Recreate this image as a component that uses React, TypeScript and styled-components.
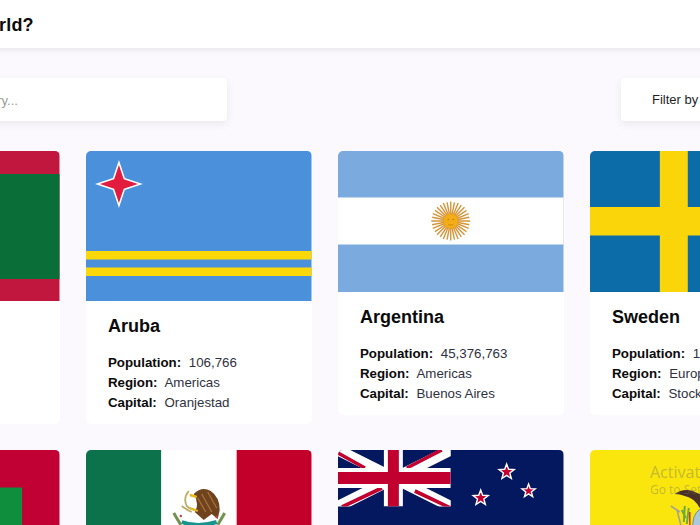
import React from "react";
import styled, { createGlobalStyle } from "styled-components";

const GlobalStyle = createGlobalStyle`
  html, body {
    margin: 0;
    padding: 0;
    height: 100%;
    overflow: hidden;
    background: #fbf9fd;
    font-family: "Liberation Sans", Arial, sans-serif;
  }
`;

const Viewport = styled.div`
  width: 700px;
  height: 525px;
  overflow: hidden;
  position: relative;
  background: #fbf9fd;
`;

const Page = styled.div`
  width: 1200px;
  margin-left: -166px;
`;

const Header = styled.header`
  height: 48px;
  background: #fff;
  box-shadow: 0 2px 6px rgba(0, 0, 0, 0.08);
  display: flex;
  align-items: center;
  padding: 2px 0 0 24px;
  box-sizing: border-box;
`;

const Title = styled.h1`
  margin: 0;
  font-size: 18px;
  font-weight: 700;
  letter-spacing: 0.2px;
  color: #0b0b0b;
  white-space: nowrap;
`;

const Toolbar = styled.div`
  display: flex;
  margin-top: 30px;
  height: 43px;
`;

const Search = styled.div`
  width: 393px;
  background: #fff;
  border-radius: 4px;
  box-shadow: 0 3px 8px rgba(0, 0, 0, 0.07);
  display: flex;
  align-items: center;
  padding: 2px 0 0 57px;
  box-sizing: border-box;
  font-size: 13px;
  color: #9a9a9a;
  white-space: nowrap;
`;

const Filter = styled.div`
  margin-left: 394px;
  width: 160px;
  background: #fff;
  border-radius: 4px;
  box-shadow: 0 3px 8px rgba(0, 0, 0, 0.07);
  display: flex;
  align-items: center;
  padding-left: 31px;
  box-sizing: border-box;
  font-size: 13px;
  color: #1f1f28;
  white-space: nowrap;
`;

const Grid = styled.div`
  display: grid;
  grid-template-columns: repeat(4, 225.5px);
  column-gap: 26.5px;
  row-gap: 26px;
  margin-top: 30px;
  align-items: start;
`;

const Card = styled.article`
  background: #fff;
  border-radius: 5px;
  overflow: hidden;
`;

const FlagBox = styled.svg.attrs({ preserveAspectRatio: "none" })`
  display: block;
  width: 100%;
`;

const Body = styled.div`
  padding: 14px 22px 11px;
`;

const Name = styled.h2`
  margin: 0 0 16px;
  font-size: 18px;
  line-height: 22px;
  font-weight: 700;
  color: #0b0b0b;
`;

const Stat = styled.div`
  font-size: 13.3px;
  line-height: 20px;
  color: #2f3140;
  white-space: nowrap;
`;

const StatLabel = styled.b`
  color: #0b0b0b;
  margin-right: 4px;
`;

const Watermark = styled.div`
  position: absolute;
  left: 650px;
  top: 463px;
  color: rgba(110, 110, 110, 0.4);
  font-family: "Open Sans", sans-serif;
  white-space: nowrap;
`;

const WatermarkTitle = styled.div`
  font-size: 16px;
  line-height: 19px;
`;

const WatermarkSub = styled.div`
  font-size: 12px;
  line-height: 16px;
`;

const Transnistria = () => (
  <FlagBox viewBox="0 0 226 150" height="150">
    <rect width="226" height="150" fill="#c1163d" />
    <rect y="23" width="226" height="105" fill="#0a6e38" />
  </FlagBox>
);

const Aruba = () => (
  <FlagBox viewBox="0 0 226 150" height="150">
    <rect width="226" height="150" fill="#4a90db" />
    <rect y="100" width="226" height="8.5" fill="#fdd809" />
    <rect y="116.5" width="226" height="8.5" fill="#fdd809" />
    <path d="M33 9 L39 27 L57 33 L39 39 L33 57 L27 39 L9 33 L27 27 Z" fill="#fff" />
    <path d="M33 14 L37.8 28.2 L52 33 L37.8 37.8 L33 52 L28.2 37.8 L14 33 L28.2 28.2 Z" fill="#e31b3f" />
  </FlagBox>
);

const sunRays = Array.from({ length: 32 }, (_, i) => (i * 360) / 32);

const Argentina = () => (
  <FlagBox viewBox="0 0 226 141" height="141">
    <rect width="226" height="141" fill="#7babde" />
    <rect y="46.5" width="226" height="47" fill="#fff" />
    {sunRays.map((a, i) => (
      <line
        key={a}
        x1="113"
        y1="70"
        x2="113"
        y2={i % 2 ? 51 : 50.5}
        stroke="#d6953a"
        strokeWidth="1.4"
        transform={`rotate(${a} 113 70)`}
      />
    ))}
    <circle cx="113" cy="70" r="7.5" fill="#f3ae17" stroke="#e09a1a" strokeWidth="0.6" />
    <circle cx="110.5" cy="68.5" r="0.8" fill="#b9791a" />
    <circle cx="115.5" cy="68.5" r="0.8" fill="#b9791a" />
    <path d="M110.5 73.5 Q113 75 115.5 73.5" stroke="#b9791a" strokeWidth="0.7" fill="none" />
  </FlagBox>
);

const Sweden = () => (
  <FlagBox viewBox="0 0 226 141" height="141">
    <rect width="226" height="141" fill="#0b6ca8" />
    <rect x="70" width="28" height="141" fill="#fad50a" />
    <rect y="56" width="226" height="28.5" fill="#fad50a" />
  </FlagBox>
);

const Maldives = () => (
  <FlagBox viewBox="0 0 226 150" height="150">
    <rect width="226" height="150" fill="#c10034" />
    <rect x="37.5" y="37.5" width="151" height="75" fill="#0f8f3e" />
  </FlagBox>
);

const Mexico = () => (
  <FlagBox viewBox="0 0 226 130" height="130">
    <rect width="75.5" height="130" fill="#0b724b" />
    <rect x="75.5" width="75.5" height="130" fill="#fff" />
    <rect x="151" width="75" height="130" fill="#c30029" />
    <path d="M108 44 Q116 36 125 41 Q134 47 134 60 L132 69 L126 64 L118 70 L109 62 Q114 54 108 44 Z" fill="#6f431d" />
    <path d="M116 44 L126 62 M122 42 L131 58 M112 48 L120 62" stroke="#a9713a" strokeWidth="1.3" />
    <path d="M103 41 Q97 48 101 56 Q105 60 110 60 M96 56 Q101 60 106 62" stroke="#b9ad6a" strokeWidth="1.8" fill="none" />
    <path d="M104 45 L111 47" stroke="#e8b81c" strokeWidth="2.4" />
    <path d="M104 58 L112 61" stroke="#e8b81c" strokeWidth="2" />
    <path d="M88 63 L92 70 M91 68 L95 75" stroke="#72934f" strokeWidth="3" fill="none" />
    <path d="M139 63 L135 70 M136 68 L132 75" stroke="#72934f" strokeWidth="3" fill="none" />
    <path d="M96 72 Q112 78 131 72" stroke="#19938e" strokeWidth="4" fill="none" />
    <circle cx="95" cy="66" r="1.2" fill="#c6394a" />
    <circle cx="131" cy="67" r="1.2" fill="#c6394a" />
  </FlagBox>
);

const nzStars = [
  [169, 22, 8],
  [143, 48, 8],
  [191, 41, 7],
];

const starPoints = (cx: number, cy: number, r: number) =>
  Array.from({ length: 10 }, (_, i) => {
    const rad = i % 2 ? r * 0.42 : r;
    const a = (i * Math.PI) / 5 - Math.PI / 2;
    return `${cx + rad * Math.cos(a)},${cy + rad * Math.sin(a)}`;
  }).join(" ");

const NewZealand = () => (
  <FlagBox viewBox="0 0 226 113" height="113">
    <rect width="226" height="113" fill="#03185f" />
    <svg width="113" height="56.5" viewBox="0 0 113 56.5">
      <path d="M0 0 L113 56.5 M113 0 L0 56.5" stroke="#fff" strokeWidth="11" />
      <path d="M0 3 L27 18 M69 18 L104 0 M4 57 L44 38 M77 41 L113 58" stroke="#c2002f" strokeWidth="3.6" />
      <rect x="46" width="19" height="56.5" fill="#fff" />
      <rect y="18" width="113" height="20" fill="#fff" />
      <rect x="50" width="11" height="56.5" fill="#c2002f" />
      <rect y="22" width="113" height="12" fill="#c2002f" />
    </svg>
    {nzStars.map(([cx, cy, r]) => (
      <polygon key={cx} points={starPoints(cx, cy, r)} fill="#c2002f" stroke="#fff" strokeWidth="1.4" />
    ))}
  </FlagBox>
);

const Ecuador = () => (
  <FlagBox viewBox="0 0 226 150" height="150">
    <rect width="226" height="150" fill="#fae60c" />
    <path d="M85 44 Q93 38 103 41 L112 45 L116 56 L112 62 Q106 48 95 46 Q90 44 85 44 Z" fill="#4a3128" />
    <path d="M87 59 L91 75 M81 56 L90 62" stroke="#a9a196" strokeWidth="1.6" />
    <path d="M95 56 L94 72 M99 58 L97 74 M92 60 L96 68" stroke="#6fa83f" strokeWidth="2" />
    <path d="M100 62 L100 75" stroke="#c9403a" strokeWidth="1.6" />
    <ellipse cx="115" cy="74" rx="12" ry="16" fill="#a9c9dc" stroke="#7a8a8a" strokeWidth="1" />
  </FlagBox>
);

type Country = {
  name: string;
  population: string;
  region: string;
  capital: string;
  flag: React.ReactNode;
};

const countries: Country[] = [
  { name: "Transnistria", population: "475,373", region: "Europe", capital: "Tiraspol", flag: <Transnistria /> },
  { name: "Aruba", population: "106,766", region: "Americas", capital: "Oranjestad", flag: <Aruba /> },
  { name: "Argentina", population: "45,376,763", region: "Americas", capital: "Buenos Aires", flag: <Argentina /> },
  { name: "Sweden", population: "10,353,442", region: "Europe", capital: "Stockholm", flag: <Sweden /> },
  { name: "Maldives", population: "540,542", region: "Asia", capital: "Malé", flag: <Maldives /> },
  { name: "Mexico", population: "128,932,753", region: "Americas", capital: "Mexico City", flag: <Mexico /> },
  { name: "New Zealand", population: "5,084,300", region: "Oceania", capital: "Wellington", flag: <NewZealand /> },
  { name: "Ecuador", population: "17,643,060", region: "Americas", capital: "Quito", flag: <Ecuador /> },
];

const App: React.FC = () => (
  <Viewport>
    <GlobalStyle />
    <Page>
      <Header>
        <Title>Where in the world?</Title>
      </Header>
      <Toolbar>
        <Search>Search for a country...</Search>
        <Filter>Filter by Region</Filter>
      </Toolbar>
      <Grid>
        {countries.map((c) => (
          <Card key={c.name}>
            {c.flag}
            <Body>
              <Name>{c.name}</Name>
              <Stat>
                <StatLabel>Population:</StatLabel> {c.population}
              </Stat>
              <Stat>
                <StatLabel>Region:</StatLabel> {c.region}
              </Stat>
              <Stat>
                <StatLabel>Capital:</StatLabel> {c.capital}
              </Stat>
            </Body>
          </Card>
        ))}
      </Grid>
    </Page>
    <Watermark>
      <WatermarkTitle>Activate Windows</WatermarkTitle>
      <WatermarkSub>Go to Settings to activate Windows.</WatermarkSub>
    </Watermark>
  </Viewport>
);

export default App;
